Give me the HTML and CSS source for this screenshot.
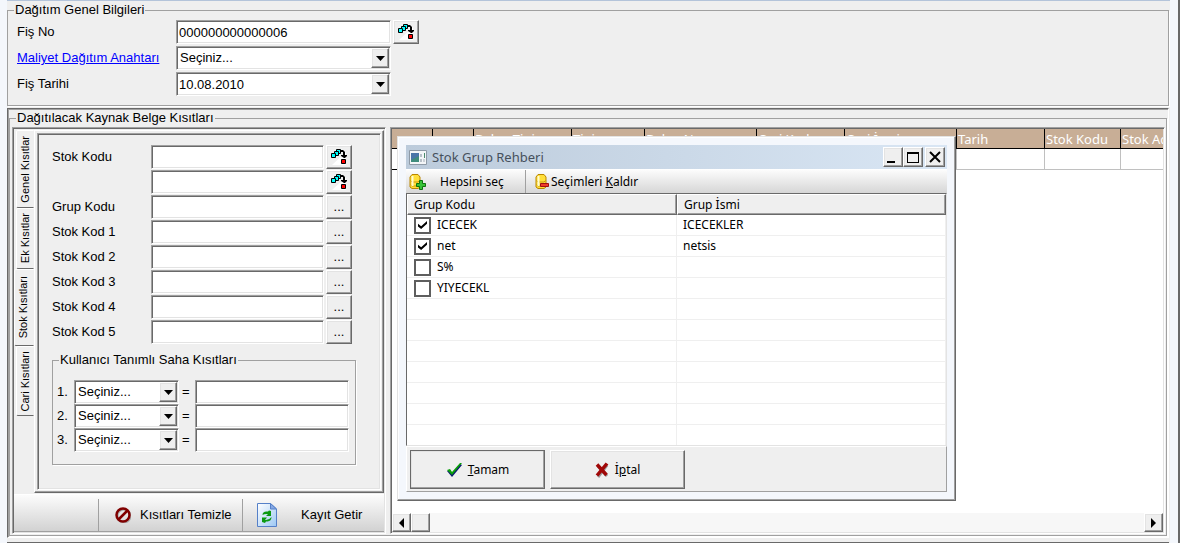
FILE: index.html
```html
<!DOCTYPE html>
<html lang="tr">
<head>
<meta charset="utf-8">
<title>Dağıtım</title>
<link rel="stylesheet" href="styles.css">
</head>
<body>
<svg class="defs" aria-hidden="true">
  <symbol id="i-guide" viewBox="0 0 18 16">
    <path d="M2 16 16 3v13z" fill="#fff"/>
    <g fill="#0ff" stroke="#000"><path d="M6.500 .5h4v4h-4z"/><path d="M4.500 2.500h4v4h-4z"/><path d="M1.500 4.500h4v4h-4z"/></g>
    <path d="M11 1h2l2 2v3h2v1l-2 2h-1l-3-2V6h2V3h-2z" fill="#000"/>
    <path d="M11.500 10.500h4v4h-4z" fill="#f00" stroke="#000"/>
  </symbol>
  <symbol id="i-down" viewBox="0 0 9 5"><path d="M0 0h9L4.500 5z"/></symbol>
  <symbol id="i-left" viewBox="0 0 5 10"><path d="M5 0v10L0 5z"/></symbol>
  <symbol id="i-right" viewBox="0 0 5 10"><path d="M0 0v10l5-5z"/></symbol>
  <symbol id="i-db" viewBox="0 0 17 16">
    <path d="M1 3 3 .5h6L11 3v10l-2 1.500H3L1 13z" fill="#ffdf3a" stroke="#b98600"/>
    <path d="M1.500 6.500 3 8h6l1.500-1.500M1.500 10.500 3 12h6l1.500-1.500" fill="none" stroke="#c99a0c"/>
    <path d="M3.500 2v10" stroke="#fffbd0" stroke-width="2"/>
  </symbol>
</svg>
<main class="page">
  <fieldset class="group general">
    <legend>Dağıtım Genel Bilgileri</legend>
    <div class="general-grid">
      <label for="fisno">Fiş No</label>
      <input class="box" id="fisno" type="text" value="000000000000006">
      <button class="btn sq" type="button" aria-label="Fiş rehberi"><svg class="guide"><use href="#i-guide"/></svg></button>
      <a href="#anahtar">Maliyet Dağıtım Anahtarı</a>
      <span class="combo"><select class="box" id="anahtar" aria-label="Maliyet Dağıtım Anahtarı"><option>Seçiniz...</option></select><span class="btn drop"><svg class="down"><use href="#i-down"/></svg></span></span>
      <span></span>
      <label for="tarih">Fiş Tarihi</label>
      <span class="combo"><input class="box" id="tarih" type="text" value="10.08.2010"><button class="btn drop" type="button" aria-label="Takvim"><svg class="down"><use href="#i-down"/></svg></button></span>
    </div>
  </fieldset>

  <section class="sunken-frame">
    <fieldset class="group source">
      <legend>Dağıtılacak Kaynak Belge Kısıtları</legend>
      <div class="columns">
        <div class="filters sunken">
          <div class="tabbed">
            <div class="tabs" role="tablist">
              <button class="tab t1" role="tab" type="button"><span>Genel Kısıtlar</span></button>
              <button class="tab t2" role="tab" type="button"><span>Ek Kısıtlar</span></button>
              <button class="tab t3 active" role="tab" type="button" aria-selected="true"><span>Stok Kısıtları</span></button>
              <button class="tab t4" role="tab" type="button"><span>Cari Kısıtları</span></button>
            </div>
            <div class="tab-page">
              <div class="tab-inner">
                <div class="stock-grid">
                  <label for="s1">Stok Kodu</label><input class="box" id="s1" type="text"><button class="btn sq" type="button" aria-label="Stok rehberi"><svg class="guide"><use href="#i-guide"/></svg></button>
                  <span></span><input class="box" type="text" aria-label="Stok Kodu bitiş"><button class="btn sq" type="button" aria-label="Stok rehberi"><svg class="guide"><use href="#i-guide"/></svg></button>
                  <label for="s2">Grup Kodu</label><input class="box" id="s2" type="text"><button class="btn sq" type="button">...</button>
                  <label for="s3">Stok Kod 1</label><input class="box" id="s3" type="text"><button class="btn sq" type="button">...</button>
                  <label for="s4">Stok Kod 2</label><input class="box" id="s4" type="text"><button class="btn sq" type="button">...</button>
                  <label for="s5">Stok Kod 3</label><input class="box" id="s5" type="text"><button class="btn sq" type="button">...</button>
                  <label for="s6">Stok Kod 4</label><input class="box" id="s6" type="text"><button class="btn sq" type="button">...</button>
                  <label for="s7">Stok Kod 5</label><input class="box" id="s7" type="text"><button class="btn sq" type="button">...</button>
                </div>
                <fieldset class="group custom">
                  <legend>Kullanıcı Tanımlı Saha Kısıtları</legend>
                  <div class="custom-grid">
                    <label for="k1">1.</label><span class="combo"><select class="box" id="k1"><option>Seçiniz...</option></select><span class="btn drop"><svg class="down"><use href="#i-down"/></svg></span></span><span>=</span><input class="box" type="text" aria-label="Değer 1">
                    <label for="k2">2.</label><span class="combo"><select class="box" id="k2"><option>Seçiniz...</option></select><span class="btn drop"><svg class="down"><use href="#i-down"/></svg></span></span><span>=</span><input class="box" type="text" aria-label="Değer 2">
                    <label for="k3">3.</label><span class="combo"><select class="box" id="k3"><option>Seçiniz...</option></select><span class="btn drop"><svg class="down"><use href="#i-down"/></svg></span></span><span>=</span><input class="box" type="text" aria-label="Değer 3">
                  </div>
                </fieldset>
              </div>
            </div>
          </div>
          <div class="actions">
            <span class="spacer"></span>
            <button class="action clear" type="button">
              <svg width="16" height="16" viewBox="0 0 16 16"><circle cx="9" cy="9" r="6.500" fill="none" stroke="#aaa" stroke-width="2"/><circle cx="8" cy="8" r="6.500" fill="none" stroke="#800000" stroke-width="2.500"/><path d="M3.500 12.500l9-9" stroke="#800000" stroke-width="2.500"/></svg>
              Kısıtları Temizle</button>
            <button class="action fetch" type="button">
              <svg width="20" height="24" viewBox="0 0 20 24"><defs><linearGradient id="pg" x1="0" y1="0" x2="1" y2="1"><stop offset="0" stop-color="#fff"/><stop offset="1" stop-color="#9cc8f4"/></linearGradient></defs><path d="M.5 .5h13l6 5.500v17.500H.5z" fill="url(#pg)" stroke="#5580c8"/><path d="M13.500 .5v5.500h6z" fill="#86a8e4" stroke="#5580c8"/><path d="M5.500 12q0-3.500 4-3.500h1.500l1-1 2 .5v5h-5l2-2H9.500q-2.500 0-4 1zM14.500 14q0 4-4 4.500H9l-1 1.500-3-1v-4.500h5l-2 2.500q4 .5 6.500-3z" fill="#0b9a12"/></svg>
              Kayıt Getir</button>
          </div>
        </div>

        <div class="results sunken">
          <div class="table-wrap">
            <table class="docs">
              <colgroup><col class="c41"><col class="c41"><col class="c98"><col class="c73"><col class="c112"><col class="c88"><col class="c112"><col class="c88"><col class="c76"><col class="c88"></colgroup>
              <thead><tr><th></th><th></th><th>Belge Tipi</th><th>Tipi</th><th>Belge No</th><th>Cari Kodu</th><th>Cari İsmi</th><th>Tarih</th><th>Stok Kodu</th><th>Stok Adı</th></tr></thead>
              <tbody><tr><td class="fixed"></td><td></td><td></td><td></td><td></td><td></td><td></td><td></td><td></td><td></td></tr></tbody>
            </table>
          </div>
          <div class="scrollbar">
            <button class="btn sb" type="button" aria-label="Sola kaydır"><svg class="side"><use href="#i-left"/></svg></button>
            <span class="btn sb"></span>
            <span class="track"></span>
            <button class="btn sb" type="button" aria-label="Sağa kaydır"><svg class="side"><use href="#i-right"/></svg></button>
          </div>
        </div>
      </div>
    </fieldset>
  </section>
  <div class="next-panel"></div>
</main>

<div class="dialog" role="dialog" aria-labelledby="dlg-title">
  <div class="titlebar">
    <svg width="18" height="15" viewBox="0 0 18 15"><path d="M.5 .5h17v14H.5z" fill="#f4f6f8" stroke="#8e9aa6"/><path d="M2 3h8v9H2z" fill="#3f8c7c"/><path d="M2 3h8v3L2 10z" fill="#4a75a8"/><path d="M11 4h2v3h-2zM11 9h2v3h-2z" fill="#b8c0c8"/><path d="M14 9h2v3h-2z" fill="#ccd2d8"/><path d="M15 3h1v5h-1z" fill="#4a8a6c"/></svg>
    <h1 id="dlg-title">Stok Grup Rehberi</h1>
    <button class="btn cap" type="button" aria-label="Simge durumuna küçült"><svg width="14" height="14" viewBox="0 0 14 14"><path d="M1 11h8v2H1z"/></svg></button>
    <button class="btn cap" type="button" aria-label="Ekranı kapla"><svg width="14" height="14" viewBox="0 0 14 14"><path d="M1 2h12v11H1zM2 4v8h10V4z" fill-rule="evenodd"/></svg></button>
    <button class="btn cap close" type="button" aria-label="Kapat"><svg width="14" height="14" viewBox="0 0 14 14"><path d="M2 2l10 10M12 2L2 12" stroke="#000" stroke-width="2"/></svg></button>
  </div>
  <div class="toolbar">
    <button class="tool all" type="button"><svg width="17" height="16" viewBox="0 0 17 16"><use href="#i-db"/><path d="M10.500 6.500h3v3h3v3h-3v3h-3v-3h-3v-3h3z" fill="#36c236" stroke="#0d720d"/></svg>Hepsini seç</button>
    <button class="tool none" type="button"><svg width="14" height="16" viewBox="0 0 14 16"><use href="#i-db" width="17" height="16"/><path d="M5.500 9.500h8v3h-8z" fill="#f03c28" stroke="#a01010"/></svg><span>Seçimleri <u>K</u>aldır</span></button>
  </div>
  <table class="list">
    <thead><tr><th class="code">Grup Kodu</th><th>Grup İsmi</th></tr></thead>
    <tbody>
      <tr><td><label><input type="checkbox" checked>ICECEK</label></td><td>ICECEKLER</td></tr>
      <tr><td><label><input type="checkbox" checked>net</label></td><td>netsis</td></tr>
      <tr><td><label><input type="checkbox">S%</label></td><td></td></tr>
      <tr><td><label><input type="checkbox">YIYECEKL</label></td><td></td></tr>
      <tr><td></td><td></td></tr>
      <tr><td></td><td></td></tr>
      <tr><td></td><td></td></tr>
      <tr><td></td><td></td></tr>
      <tr><td></td><td></td></tr>
      <tr><td></td><td></td></tr>
      <tr><td></td><td></td></tr>
    </tbody>
  </table>
  <div class="buttons">
    <button class="btn big default" type="button"><svg width="17" height="16" viewBox="0 0 17 16"><path d="M1 9l3-1 2 3 8-9 2 1-10 12z" fill="#0b1a70"/><path d="M1 8l3-1 2 3 8-9 2 0-10 12z" fill="#0aa00a"/></svg><span><u>T</u>amam</span></button>
    <button class="btn big" type="button"><svg width="15" height="16" viewBox="0 0 15 16"><path d="M3 4l9 10M12 3L3 15" stroke="#999" stroke-width="3"/><path d="M2 2.500l9.500 10.500M12 1.500L2 13.500" stroke="#a00808" stroke-width="3.500"/></svg><span>İ<u>p</u>tal</span></button>
  </div>
</div>
</body>
</html>
```
FILE: styles.css
```css
* { box-sizing: border-box; }

body {
  --face: #efefef;
  --gray: #a0a0a0;
  --dark: #696969;
  --light: #e3e3e3;
  --frame: #f4f7fc;
  margin: 0;
  min-height: 100vh;
  overflow: hidden;
  padding: 0 8px 0 7px;
  background: var(--frame);
  border-right: 2px solid var(--dark);
  color: #000;
  font: 13px/18px "Liberation Sans", Arial, sans-serif;
}

button, input, select { font: inherit; color: inherit; }
.defs { display: none; }

.page {
  min-height: 100vh;
  padding-right: 1px;
  background: var(--face);
  border-top: 1px solid #b4c4da;
}

/* Etched group box */
.group {
  margin: 0;
  padding: 0;
  min-width: 0;
  border: 1px solid var(--gray);
  box-shadow: 1px 1px 0 #fff;
}
.group > legend { padding: 0 1px; margin-left: 6px; }
.general { padding: 0 6px 8px; }
.general > legend { margin-left: 0; }
.general-grid {
  display: grid;
  grid-template-columns: 159px 215px auto;
  grid-auto-rows: 26px;
  align-items: center;
  justify-content: start;
  padding-left: 3px;
}
.general-grid a { color: #00f; text-decoration: underline; }

/* Sunken fields */
.box {
  width: 100%;
  height: 24px;
  margin: 0;
  padding: 0 3px;
  border: 1px solid;
  border-color: var(--gray) #fff #fff var(--gray);
  border-radius: 0;
  background: #fff;
  box-shadow: inset 1px 1px 0 var(--dark), inset -1px -1px 0 var(--light);
  outline: 0;
  appearance: none;
}
.general-grid input { padding: 0 2px; }
.combo { position: relative; display: block; height: 24px; }
.btn {
  display: flex;
  align-items: center;
  justify-content: center;
  padding: 0;
  background: var(--face);
  border: 1px solid;
  border-color: #fff var(--dark) var(--dark) #fff;
  border-radius: 0;
  box-shadow: inset -1px -1px 0 var(--gray), inset 1px 1px 0 var(--light);
}
.drop {
  position: absolute;
  top: 2px;
  right: 2px;
  bottom: 2px;
  width: 18px;
  pointer-events: none;
}
.down { width: 9px; height: 5px; }
.side { width: 5px; height: 10px; }
.guide { width: 18px; height: 16px; }
.sq { width: 26px; height: 24px; }
.general-grid .sq { margin-left: 2px; }

/* Lower section */
.sunken-frame {
  margin-top: 2px;
  border: 1px solid;
  border-color: var(--dark) #fff #fff var(--dark);
  box-shadow: inset 1px 1px 0 var(--gray);
}
.source { margin: 0 1px 1px; }
.source > legend { padding: 0 1px; }
.columns {
  display: grid;
  grid-template-columns: 374px minmax(0, 1fr);
  gap: 4px;
  padding: 0 1px 1px 2px;
}
.sunken {
  padding: 1px;
  border: 1px solid;
  border-color: var(--gray) #fff #fff var(--gray);
  box-shadow: inset 1px 1px 0 var(--dark), inset -1px -1px 0 var(--light);
}
.filters { display: flex; flex-direction: column; }
.tabbed { display: flex; padding: 1px 0; }
.tabs { width: 20px; flex: none; }
.tab {
  display: flex;
  align-items: center;
  justify-content: center;
  width: 18px;
  margin-left: 2px;
  padding: 0;
  background: var(--face);
  border: 1px solid;
  border-color: #fff transparent var(--dark) #fff;
  border-radius: 2px 0 0 2px;
  font-size: 11px;
}
.tab span { writing-mode: vertical-rl; transform: rotate(180deg); white-space: nowrap; }
.tab.active { width: 20px; margin-left: 0; padding-right: 2px; }
.t1 { height: 78px; }
.t2 { height: 61px; }
.t3 { height: 77px; }
.t4 { height: 70px; }
.tab-page {
  flex: 1;
  padding: 2px;
  border: 1px solid;
  border-color: #fff var(--dark) var(--dark) #fff;
  box-shadow: inset -1px -1px 0 var(--gray);
}
.tab-inner {
  height: 100%;
  padding: 10px 24px 24px 14px;
  border: 1px solid;
  border-color: var(--gray) #fff #fff var(--gray);
  box-shadow: inset 1px 1px 0 var(--dark), inset -1px -1px 0 var(--light);
}
.stock-grid {
  display: grid;
  grid-template-columns: 97px minmax(0, 1fr) 26px;
  grid-auto-rows: 25px;
  column-gap: 2px;
  align-items: center;
  margin-right: 4px;
}
.stock-grid .sq { line-height: 20px; }
.custom { margin-top: 7px; padding: 0 6px 12px 4px; }
.custom > legend { margin-left: 2px; }
.custom-grid {
  display: grid;
  grid-template-columns: 17px 105px 16px minmax(0, 1fr);
  grid-auto-rows: 24px;
  align-items: center;
  padding-top: 11px;
}
.custom-grid > span:not(.combo) { padding-left: 3px; }

.actions {
  display: flex;
  height: 38px;
  border-top: 1px solid #fff;
  border-bottom: 1px solid var(--gray);
  background: linear-gradient(#fcfcfc, #d2d2d2);
}
.spacer { width: 84px; }
.action {
  display: flex;
  align-items: center;
  margin-top: 4px;
  padding: 0;
  background: none;
  border: 0;
  border-left: 1px solid var(--gray);
  white-space: nowrap;
}
.clear { width: 144px; gap: 9px; padding-left: 16px; }
.fetch { flex: 1; gap: 24px; padding-left: 14px; }

.results { display: flex; flex-direction: column; background: #fff; min-width: 0; }
.table-wrap { flex: 1; overflow: hidden; }
.docs {
  width: 816px;
  table-layout: fixed;
  border-collapse: separate;
  border-spacing: 0;
  font: 13px/18px "Noto Sans", Tahoma, sans-serif;
}
.docs th {
  height: 20px;
  padding: 1px 1px 0;
  overflow: hidden;
  background: #c8ae96;
  border-right: 1px solid #000;
  border-bottom: 1px solid #000;
  color: #fff;
  font-weight: 400;
  text-align: left;
  white-space: nowrap;
}
.docs td {
  height: 21px;
  padding: 0;
  border-right: 1px solid #c0c0c0;
  border-bottom: 1px solid #c0c0c0;
}
.docs td.fixed { border-color: #000; }
.c41 { width: 41px; }
.c98 { width: 98px; }
.c73 { width: 73px; }
.c112 { width: 112px; }
.c88 { width: 88px; }
.c76 { width: 76px; }
.scrollbar { display: flex; height: 19px; background: #f7f7f7; }
.sb { width: 19px; height: 19px; flex: none; }
.track { flex: 1; }
.next-panel { height: 8px; margin-top: 4px; border-top: 2px solid var(--dark); }

/* Floating dialog */
.dialog {
  position: absolute;
  top: 136px;
  left: 397px;
  width: 559px;
  padding: 8px;
  background: var(--frame);
  border: 1px solid;
  border-color: var(--light) var(--dark) var(--dark) var(--light);
  box-shadow: inset -1px -1px 0 var(--gray), inset 1px 1px 0 #fff;
  font: 12px/18px "Noto Sans", Tahoma, sans-serif;
}
.titlebar {
  display: flex;
  align-items: center;
  height: 24px;
  padding: 0 2px 0 3px;
  background: linear-gradient(90deg, #bccbdb, #d9e6f4);
}
.titlebar h1 {
  flex: 1;
  margin: 0 0 0 5px;
  color: #46505c;
  font-size: 13px;
  font-weight: 400;
}
.cap { width: 20px; height: 20px; }
.close { margin-left: 2px; }
.toolbar {
  display: flex;
  height: 24px;
  border-top: 1px solid #fff;
  background: linear-gradient(#fcfcfc, #d6d6d6);
}
.tool {
  display: flex;
  align-items: center;
  padding: 0;
  background: none;
  border: 0;
}
.all { width: 120px; gap: 14px; padding-left: 3px; border-right: 1px solid var(--gray); }
.none { gap: 2px; padding-left: 9px; }
.list {
  width: 100%;
  table-layout: fixed;
  border-collapse: separate;
  border-spacing: 0;
  background: #fff;
  border: 1px solid;
  border-color: var(--dark) var(--light) var(--light) var(--dark);
}
.list th {
  height: 21px;
  padding: 0 6px;
  background: var(--face);
  border: 1px solid;
  border-color: #fff var(--dark) var(--dark) #fff;
  box-shadow: inset -1px -1px 0 var(--gray);
  font-weight: 400;
  text-align: left;
}
.list .code { width: 270px; }
.list td {
  height: 21px;
  padding: 0 6px;
  border-right: 1px solid #efefef;
  border-bottom: 1px solid #efefef;
}
.list td:first-child { padding-left: 7px; }
.list tr:last-child td { height: 20px; border-bottom: 0; }
.list label { display: flex; align-items: center; gap: 6px; }
.list input {
  display: grid;
  place-content: center;
  width: 17px;
  height: 17px;
  margin: 0;
  border: 2px solid #5e5e5e;
  background: #fff;
  appearance: none;
}
.list input:checked::before {
  content: "";
  width: 9px;
  height: 8px;
  background: #000;
  clip-path: polygon(0 35%, 35% 65%, 100% 0, 100% 35%, 35% 100%, 0 70%);
}
.buttons {
  display: flex;
  gap: 5px;
  height: 46px;
  padding: 3px;
  background: var(--face);
  border: 1px solid;
  border-color: #fff var(--gray) var(--gray) #fff;
}
.big { width: 135px; height: 39px; gap: 5px; }
.default { outline: 1px solid var(--dark); outline-offset: -1px; }
```
